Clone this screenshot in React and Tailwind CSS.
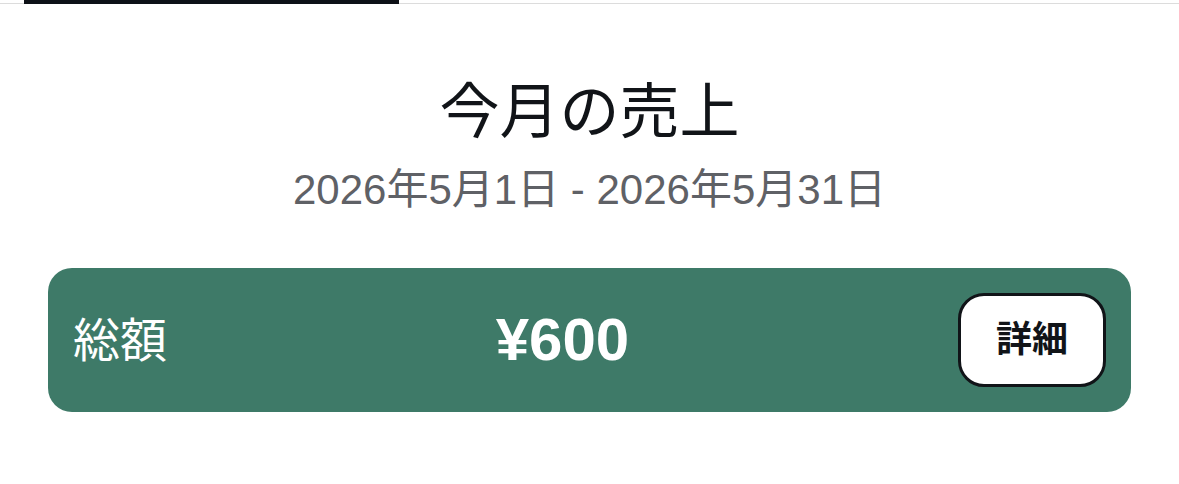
import React from 'react';

const SalesSummary = ({ title, period, total }) => {
  return (
    <div className="flex flex-col items-center">
      <h1 className="mt-[73px] text-[60px] leading-[72px] font-normal text-[#111418]">{title}</h1>
      <p className="mt-[15px] text-[42px] leading-[52px] text-[#5f6166]">{period}</p>

      {/* Total card */}
      <div className="mt-[52px] w-[1083px] flex items-center justify-between rounded-[24px] bg-[#3e7a68] p-[25px]">
        <span className="text-[47px] leading-none text-white">総額</span>
        <span className="text-[60px] leading-none font-bold text-white">{total}</span>
        <button className="w-[148px] h-[94px] flex items-center justify-center rounded-[26px] border-[3px] border-[#111418] bg-white text-[36px] font-bold text-[#111418]">
          詳細
        </button>
      </div>
    </div>
  );
};

export default function App() {
  return (
    <div
      className="w-[1179px] h-[484px] bg-white overflow-hidden"
      style={{ fontFamily: '"Liberation Sans", "Noto Sans CJK JP", sans-serif' }}
    >
      {/* Tab indicator */}
      <div className="relative h-[4px] border-b border-[#dcdcdc]">
        <div className="absolute left-[24px] top-0 w-[375px] h-[4px] bg-[#0d1117]" />
      </div>

      <SalesSummary
        title="今月の売上"
        period="2026年5月1日 - 2026年5月31日"
        total="¥600"
      />
    </div>
  );
}
